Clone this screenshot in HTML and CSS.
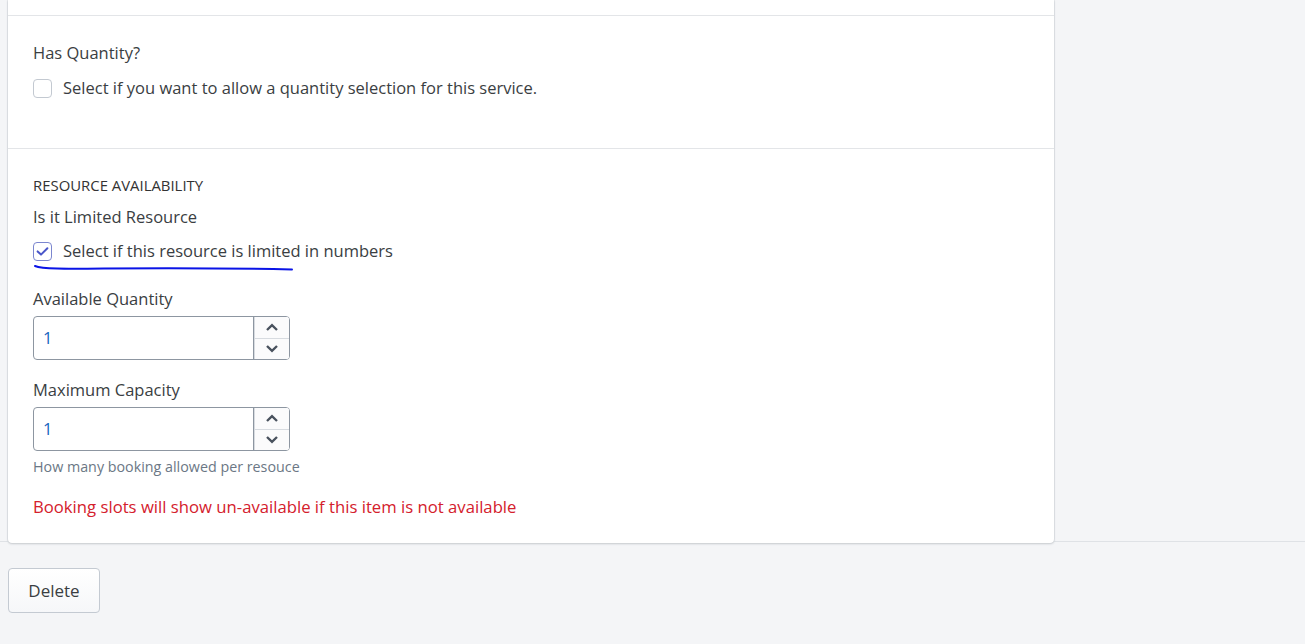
FILE: index.html
```
<!DOCTYPE html>
<html lang="en">
<head>
<meta charset="utf-8">
<title>Service resource</title>
<link rel="stylesheet" href="styles.css">
</head>
<body>
<div class="content">
  <div class="card">
    <div class="section section-top"></div>
    <div class="section">
      <div class="field-label">Has Quantity?</div>
      <label class="check-row">
        <span class="checkbox"></span>
        <span class="check-text">Select if you want to allow a quantity selection for this service.</span>
      </label>
    </div>
    <div class="section section-last">
      <div class="section-title">RESOURCE AVAILABILITY</div>
      <div class="field-label mt-9">Is it Limited Resource</div>
      <label class="check-row mt-10 underlined">
        <span class="checkbox checked">
          <svg viewBox="0 0 19 19" width="19" height="19"><path d="M4.6 9.4 L8 12.6 L14.4 6.2" fill="none" stroke="#4a56c9" stroke-width="2" stroke-linecap="round" stroke-linejoin="round"/></svg>
        </span>
        <span class="check-text">Select if this resource is limited in numbers</span>
        <svg class="scribble" viewBox="0 0 260 8" width="260" height="8"><path d="M1 2 C 8 5, 30 5, 70 4.5 C 130 4, 200 4.2, 258 5.5" fill="none" stroke="#0a14e6" stroke-width="2" stroke-linecap="round"/></svg>
      </label>
      <div class="field-label mt-24">Available Quantity</div>
      <div class="number-input">
        <div class="number-value">1</div>
        <div class="spinner">
          <span class="spin-btn"><svg viewBox="0 0 14 9" width="14" height="9"><path d="M2 7 L7 2.2 L12 7" fill="none" stroke="#49525e" stroke-width="2.4"/></svg></span>
          <span class="spin-btn"><svg viewBox="0 0 14 9" width="14" height="9"><path d="M2 2 L7 6.8 L12 2" fill="none" stroke="#49525e" stroke-width="2.4"/></svg></span>
        </div>
      </div>
      <div class="field-label mt-18">Maximum Capacity</div>
      <div class="number-input">
        <div class="number-value">1</div>
        <div class="spinner">
          <span class="spin-btn"><svg viewBox="0 0 14 9" width="14" height="9"><path d="M2 7 L7 2.2 L12 7" fill="none" stroke="#49525e" stroke-width="2.4"/></svg></span>
          <span class="spin-btn"><svg viewBox="0 0 14 9" width="14" height="9"><path d="M2 2 L7 6.8 L12 2" fill="none" stroke="#49525e" stroke-width="2.4"/></svg></span>
        </div>
      </div>
      <div class="help">How many booking allowed per resouce</div>
      <div class="warning">Booking slots will show un-available if this item is not available</div>
    </div>
  </div>
</div>
<div class="actions">
  <button class="btn">Delete</button>
</div>
</body>
</html>
```
FILE: styles.css
```
* { box-sizing: border-box; }
html, body { margin: 0; padding: 0; }
body {
  background: #f4f5f7;
  font-family: "Open Sans", "Noto Sans", sans-serif;
  font-size: 16.5px;
  color: #3a3e42;
  width: 1305px;
  height: 644px;
  overflow: hidden;
}
.content {
  padding-left: 8px;
  border-bottom: 1px solid #dfe2e6;
}
.card {
  width: 1046px;
  background: #fff;
  border-radius: 0 0 4px 4px;
  box-shadow: 0 1px 2px rgba(60, 70, 85, 0.25), -1px 0 0 #e6e8eb, 1px 0 0 #e6e8eb;
  margin-bottom: -2px;
  position: relative;
}
.section {
  padding: 25px 25px 48px;
  border-bottom: 1px solid #e3e5e8;
}
.section-top {
  height: 16px;
  padding: 0;
}
.section-last {
  border-bottom: none;
  padding-bottom: 24px;
}
.field-label {
  line-height: 24px;
  font-size: 16.5px;
}
.section-title {
  font-size: 14.9px;
  line-height: 22px;
  font-weight: 500;
  color: #333;
}
.mt-9 { margin-top: 9px; }
.mt-10 { margin-top: 10px !important; }
.mt-18 { margin-top: 18px; }
.mt-24 { margin-top: 24px; }
.check-row {
  display: flex;
  align-items: center;
  gap: 11px;
  margin-top: 11px;
  line-height: 24px;
  font-size: 16.5px;
  position: relative;
  width: max-content;
}
.checkbox {
  width: 19px;
  height: 19px;
  border: 1px solid #c3c9d1;
  border-radius: 4px;
  background: #fff;
  display: flex;
  align-items: center;
  justify-content: center;
}
.checkbox.checked { border-color: #7b86cf; }
.checkbox svg { display: block; margin: -1px; }
.scribble {
  position: absolute;
  left: 1px;
  top: 25px;
}
.number-input {
  margin-top: 5px;
  width: 257px;
  height: 44px;
  display: flex;
  border: 1px solid #8d96a1;
  border-radius: 4px;
  overflow: hidden;
}
.number-value {
  flex: 1;
  padding-left: 9px;
  line-height: 42px;
  color: #1764c0;
  font-size: 16.5px;
}
.spinner {
  width: 36px;
  display: flex;
  flex-direction: column;
  border-left: 1px solid #8d96a1;
  background: #fff;
}
.spin-btn {
  flex: 1;
  display: flex;
  align-items: center;
  justify-content: center;
  border: 1px solid #d7dbe0;
  background: #fbfbfc;
}
.spin-btn:first-child { border-bottom: none; border-top: none; border-right: none; }
.spin-btn:last-child { border-bottom: none; border-right: none; }
.spin-btn svg { display: block; }
.help {
  margin-top: 6px;
  font-size: 14.3px;
  line-height: 20px;
  color: #6b7785;
}
.warning {
  margin-top: 18px;
  font-size: 16.7px;
  line-height: 24px;
  color: #d4202c;
}
.actions {
  padding: 26px 8px 0;
}
.btn {
  width: 92px;
  height: 45px;
  font-family: inherit;
  font-size: 17px;
  color: #3a3e42;
  background: linear-gradient(#fff, #f6f7f9);
  border: 1px solid #c4cad2;
  border-radius: 4px;
  padding: 0;
}
```
